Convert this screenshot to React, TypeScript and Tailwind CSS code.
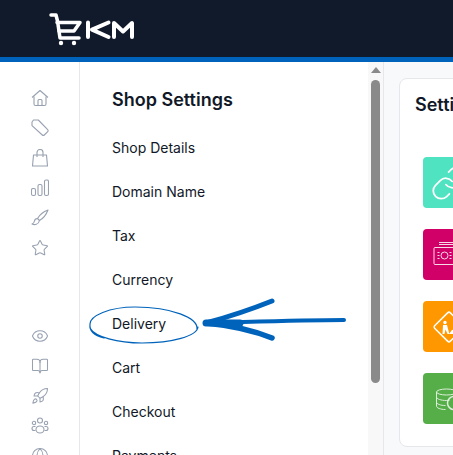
import { Star, Eye, BookOpen, Rocket, Globe, Link } from 'lucide-react';

const font = { fontFamily: 'Inter, sans-serif' };

const HomeIcon = () => (
  <svg width="18" height="18" viewBox="0 0 18 18" fill="none" stroke="currentColor" strokeWidth="1.100" strokeLinejoin="round">
    <path d="M1 8.500 9 1.500l8 7" />
    <path d="M3 7.500V15a1.500 1.500 0 0 0 1.500 1.500h9A1.500 1.500 0 0 0 15 15V7.500" />
    <path d="M7 16.500v-5a1 1 0 0 1 1-1h2a1 1 0 0 1 1 1v5" />
  </svg>
);
const TagIcon = () => (
  <svg width="18" height="18" viewBox="0 0 18 18" fill="none" stroke="currentColor" strokeWidth="1.100" strokeLinejoin="round">
    <path d="M1 3 2.500 1h4.800l9.400 9.700a1.400 1.400 0 0 1 0 2l-3.400 3.300a1.400 1.400 0 0 1-2 0L1 6.700z" />
  </svg>
);
const BagIcon = () => (
  <svg width="18" height="18" viewBox="0 0 18 18" fill="none" stroke="currentColor" strokeWidth="1.100" strokeLinejoin="round">
    <path d="M2.500 6h13l1 11h-15z" />
    <path d="M6 8V3.500a3 3 0 0 1 6 0V8" />
  </svg>
);
const BarsIcon = () => (
  <svg width="18" height="18" viewBox="0 0 18 18" fill="none" stroke="currentColor" strokeWidth="1.100">
    <rect x="0.500" y="9.500" width="4" height="7" rx="1.500" />
    <rect x="7" y="5.500" width="4" height="11" rx="1.500" />
    <rect x="13.500" y="1" width="4" height="15.500" rx="1.500" />
  </svg>
);
const BrushIcon = () => (
  <svg width="18" height="18" viewBox="0 0 18 18" fill="none" stroke="currentColor" strokeWidth="1.100" strokeLinejoin="round">
    <path d="M17 1C13 2.500 8.500 6 6.500 9.500l2 2C12 9.500 15.500 5 17 1z" />
    <path d="M6.500 9.500c-2 0-3 1.500-3.200 3-.2 1.200-1 2-2.300 2.500 2.500 1.300 6.500.8 7.500-3.500" />
  </svg>
);
const PeopleIcon = () => (
  <svg width="18" height="18" viewBox="0 0 18 18" fill="none" stroke="currentColor" strokeWidth="1.100">
    <circle cx="9" cy="3.500" r="2.500" />
    <circle cx="3" cy="6" r="1.700" />
    <circle cx="15" cy="6" r="1.700" />
    <ellipse cx="9" cy="12.500" rx="4" ry="3.500" />
    <path d="M4.500 9.500H3a2 2 0 0 0 0 4h1.500M13.500 9.500H15a2 2 0 0 1 0 4h-1.500" />
  </svg>
);

const thin = { size: 18, strokeWidth: 1.4 };

const topIcons = [
  <HomeIcon key="home" />,
  <TagIcon key="tag" />,
  <BagIcon key="bag" />,
  <BarsIcon key="bars" />,
  <BrushIcon key="brush" />,
  <Star key="star" {...thin} />,
];
const bottomIcons = [
  <Eye key="eye" {...thin} />,
  <BookOpen key="book" {...thin} />,
  <Rocket key="rocket" {...thin} />,
  <PeopleIcon key="people" />,
  <Globe key="globe" {...thin} />,
];

const navItems = ['Shop Details', 'Domain Name', 'Tax', 'Currency', 'Delivery', 'Cart', 'Checkout', 'Payments'];

const Logo = () => (
  <svg width="86" height="34" viewBox="0 0 86 34" fill="none" stroke="#fff" strokeLinecap="round" strokeLinejoin="round">
    <path d="M2 3h5l1.500 6L11 26h19" strokeWidth="3.500" />
    <path d="M8 10.500h23L25 19H10" strokeWidth="3.500" />
    <circle cx="12" cy="31" r="2.200" fill="#fff" stroke="none" />
    <circle cx="25" cy="31" r="2.200" fill="#fff" stroke="none" />
    <path d="M39 10.500V25M59.500 10.500 43 17.700 59.500 25" strokeWidth="4" />
    <path d="M65 25V11l9 8.500L83 11v14" strokeWidth="4" />
  </svg>
);

const BanknoteIcon = () => (
  <svg width="36" height="30" viewBox="0 0 36 30" fill="none" stroke="#fff" strokeWidth="1" opacity="0.85">
    <rect x="3" y="7.500" width="30" height="17" rx="1" />
    <circle cx="13.500" cy="15.500" r="3.500" />
    <path d="M6.500 12.500h2M6.500 15.500h2M6.500 18.500h2M18.500 12.500h2M18.500 15.500h2M18.500 18.500h2" />
    <path d="M8 4.500h28M8 2.500h28" />
  </svg>
);
const WorkerIcon = () => (
  <svg width="34" height="34" viewBox="0 0 34 34">
    <rect x="6" y="6" width="22" height="22" rx="2" fill="none" stroke="#fff" strokeWidth="1.500" transform="rotate(45 17 17)" />
    <circle cx="13" cy="12.500" r="1.700" fill="#fff" />
    <path d="M11 15h4l1 4 1.500 5h-2l-2-4.500-1 4.500h-2z" fill="#fff" />
    <path d="M17 24l3-4 3-1 3 5z" fill="#fff" />
  </svg>
);
const CoinsIcon = () => (
  <svg width="36" height="30" viewBox="0 0 36 30" fill="none" stroke="#fff" strokeWidth="1" opacity="0.8">
    <ellipse cx="15.500" cy="8" rx="10" ry="3" />
    <path d="M5.500 8v14c0 2 4 3.500 9 3.500M5.500 13c0 2 4.500 3.500 10 3.500 1 0 2 0 3-.2M5.500 18c0 2 4 3.500 9 3.500M25.500 8v4" />
    <circle cx="23" cy="19" r="6.500" strokeWidth="1.500" />
  </svg>
);

const tiles = [
  { color: 'bg-[#4fe3c1]', icon: <Link size={38} strokeWidth={1.1} color="#fff" /> },
  { color: 'bg-[#d10068]', icon: <BanknoteIcon /> },
  { color: 'bg-[#ff9800]', icon: <WorkerIcon /> },
  { color: 'bg-[#55ae47]', icon: <CoinsIcon /> },
];

export default function App() {
  return (
    <div className="relative h-[455px] w-[453px] overflow-hidden bg-white" style={font}>
      <header className="flex h-[62px] items-center border-b-[5px] border-[#0063bb] bg-[#111a2b] pl-[49px]">
        <Logo />
      </header>

      <div className="flex h-[393px]">
        <aside className="flex w-[80px] shrink-0 flex-col items-center border-r border-[#e5e7eb] pt-[27px] text-[#98a1b0]">
          <div className="flex flex-col items-center gap-[12px]">{topIcons}</div>
          <div className="my-[35px] h-px w-[31px] bg-[#e5e7eb]" />
          <div className="flex flex-col items-center gap-[12px]">{bottomIcons}</div>
        </aside>

        <nav className="w-[288px] shrink-0 overflow-hidden pl-[32px] pt-[27px] text-[#111827]">
          <h2 className="mb-[26px] text-[18px] font-semibold leading-[22px]">Shop Settings</h2>
          <ul className="flex flex-col gap-[22px]">
            {navItems.map((item) => (
              <li key={item} className="text-[14px] leading-[22px]">
                {item}
              </li>
            ))}
          </ul>
        </nav>

        <div className="flex w-[15px] shrink-0 flex-col items-center bg-[#f8f8f8] pt-[5px]">
          <div className="h-0 w-0 border-x-[5px] border-b-[6px] border-x-transparent border-b-[#8a8a8a]" />
          <div className="mt-[7px] h-[303px] w-[9px] rounded-full bg-[#8a8a8a]" />
        </div>

        <main className="min-w-0 flex-1 border-l border-[#e5e7eb] bg-[#f8f9fb] pl-[15px] pt-[16px]">
          <section className="h-[369px] w-[100px] overflow-hidden rounded-[8px] border border-[#e5e7eb] bg-white pl-[15px] pt-[15px]">
            <h3 className="whitespace-nowrap text-[18px] font-semibold leading-[22px] text-[#111827]">Settings</h3>
            <div className="ml-[8px] mt-[41px] flex flex-col gap-[21px]">
              {tiles.map((tile) => (
                <div key={tile.color} className={`flex h-[51px] w-[51px] shrink-0 items-center justify-center rounded-[4px] ${tile.color}`}>
                  {tile.icon}
                </div>
              ))}
            </div>
          </section>
        </main>
      </div>

      {/* hand drawn annotation over the page */}
      <svg className="pointer-events-none absolute left-0 top-0" width="453" height="455" fill="none" stroke="#0063bb" strokeLinecap="round" strokeLinejoin="round">
        <path d="M197 329c1-11-25-22-62-22-26 0-45 9-45 17-1 8 6 12 14 14M90 328c5 9 28 15 52 15 30 0 55-7 56-16" strokeWidth="1.200" />
        <path d="M344 320c-45 0-95 2-134 3" strokeWidth="4" />
        <path d="M272 301c-20 8-44 16-66 22" strokeWidth="5" />
        <path d="M206 323c20 2 44 6 66 15" strokeWidth="5.500" />
        <path d="M206 323h34" strokeWidth="7" />
      </svg>
    </div>
  );
}
